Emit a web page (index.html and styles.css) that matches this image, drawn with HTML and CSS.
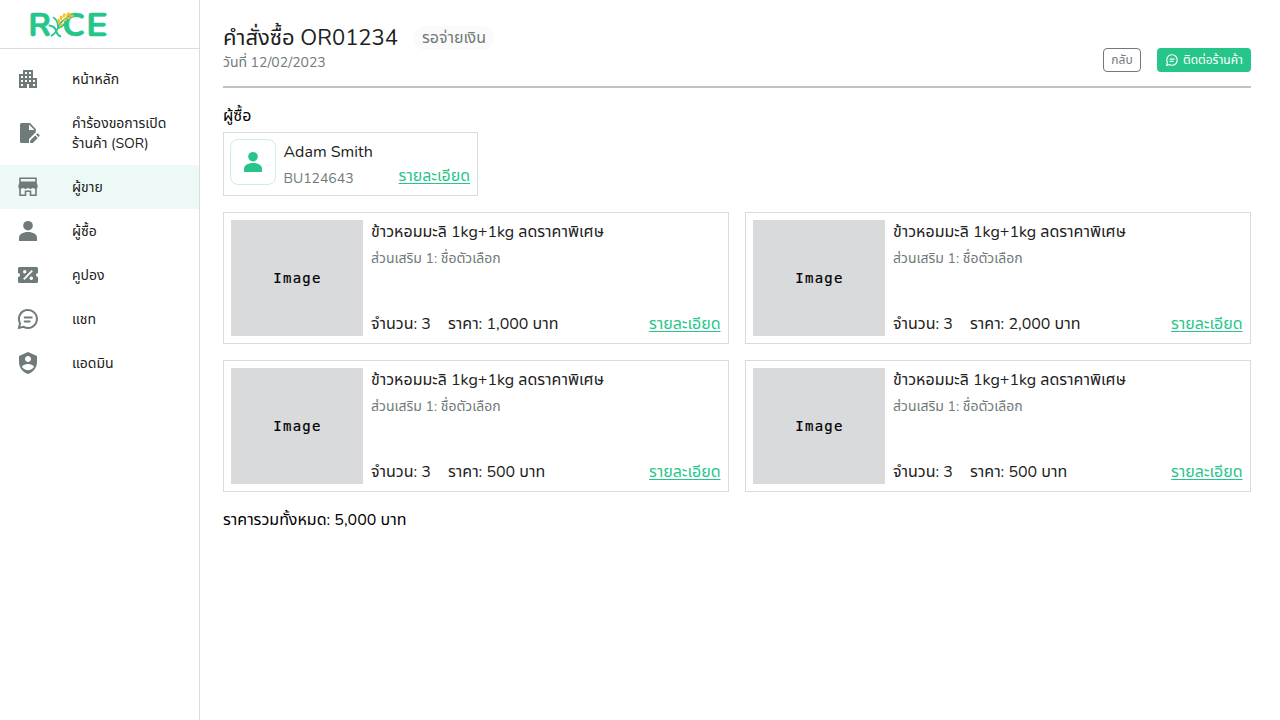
FILE: index.html
```html
<!DOCTYPE html>
<html lang="th">
<head>
<meta charset="utf-8">
<title>RICE</title>
<link rel="stylesheet" href="styles.css">
</head>
<body>
<svg class="defs" width="0" height="0">
  <symbol id="person" viewBox="0 0 24 24"><circle cx="12" cy="6.700" r="4.800"/><path d="M3 22v-3.200c0-3.600 4-5.800 9-5.800s9 2.200 9 5.800V22z"/></symbol>
  <symbol id="chat" viewBox="0 0 24 24"><path d="M3 21l1-4.800A9 9 0 1 1 7.700 19.900z" fill="none" stroke="currentColor" stroke-width="2" stroke-linejoin="miter"/><path d="M8.700 10.400h7M8.700 14.400h5" fill="none" stroke="currentColor" stroke-width="2" stroke-linecap="round"/></symbol>
</svg>
<div class="app">
  <aside class="sidebar">
    <div class="brand">
      <svg class="logo" width="80" height="28" viewBox="29 11 80 28">
        <g class="logo-text"><text transform="translate(28.200 36) scale(1.040 1)">R</text><text transform="translate(62.200 36) scale(1.040 1)">C</text><text transform="translate(86.300 36) scale(1.120 1)">E</text></g>
        <g fill="none" stroke="#26c68a" stroke-linecap="round"><path d="M67.500 18c-5.500 2-8 5.500-9.500 9.500-1.200 3-3.500 6.500-6.500 8.300" stroke-width="1.800"/><path d="M53.500 17.500c2.800 1.800 4.300 4.500 4.300 8.500" stroke-width="1.600"/><path d="M49.500 25.500c3.500.5 5.600 2.200 6.500 5 .6 2.800 1.800 4.800 4.300 5.800" stroke-width="2"/><path d="M68 19.500c-2.500 4.500-4.500 6.500-9.500 8.500" stroke-width="1.800"/></g>
        <g fill="#fdbb24"><ellipse cx="58.800" cy="21" rx="1.400" ry="2.400" transform="rotate(-8 59 21)"/><ellipse cx="61" cy="17.800" rx="1.400" ry="2.400"/><ellipse cx="64" cy="15.500" rx="1.400" ry="2.300" transform="rotate(15 64 15.700)"/><ellipse cx="68" cy="14.200" rx="1.400" ry="2.200" transform="rotate(45 68 14.300)"/><ellipse cx="71.500" cy="15.800" rx="2.400" ry="1.400"/><ellipse cx="68.500" cy="18" rx="2.200" ry="1.300"/><ellipse cx="65" cy="20" rx="2" ry="1.300"/><ellipse cx="61" cy="25" rx="1.400" ry="2" transform="rotate(45 61 25)"/></g>
      </svg>
    </div>
    <nav class="nav">
      <a class="nav-item"><svg class="icon" viewBox="0 0 24 24"><path d="M17 11V3H7v4H3v14h8v-4h2v4h8V11h-4zM7 19H5v-2h2v2zm0-4H5v-2h2v2zm0-4H5V9h2v2zm4 4H9v-2h2v2zm0-4H9V9h2v2zm0-4H9V5h2v2zm4 8h-2v-2h2v2zm0-4h-2V9h2v2zm0-4h-2V5h2v2zm4 12h-2v-2h2v2zm0-4h-2v-2h2v2z"/></svg><span>หน้าหลัก</span></a>
      <a class="nav-item two"><svg class="icon" viewBox="0 0 24 24"><path d="M5.500 2H14l5.800 6v3.300L13 18v4H5.500A1.500 1.500 0 0 1 4 20.500v-17A1.500 1.500 0 0 1 5.500 2zM13 3.600V9h5.400z" fill-rule="evenodd"/><path d="M14.200 22v-2.600l5-5 2.600 2.600-5 5zM20 13.600l.9-.9c.4-.4.900-.4 1.300 0l1.200 1.200c.4.400.4.900 0 1.300l-.9.900z"/></svg><span>คำร้องขอการเปิด<br>ร้านค้า (SOR)</span></a>
      <a class="nav-item active"><svg class="icon" viewBox="0 0 24 24"><path d="M3.600 6.500h16.800l1.300 4.800c0 1.600-.8 2.700-2.200 2.700-1 0-1.800-.5-2.500-1.200-.7.700-1.500 1.200-2.500 1.200s-1.800-.5-2.500-1.200c-.7.700-1.500 1.200-2.500 1.200s-1.800-.5-2.500-1.200c-.7.700-1.500 1.200-2.500 1.200-1.400 0-2.200-1.100-2.200-2.700z"/><path d="M4 7V3.300h16V7M4 12v8.300h5.500v-4h5v4H20V12" fill="none" stroke="currentColor" stroke-width="1.600"/></svg><span>ผู้ขาย</span></a>
      <a class="nav-item"><svg class="icon"><use href="#person"/></svg><span>ผู้ซื้อ</span></a>
      <a class="nav-item"><svg class="icon" viewBox="0 0 24 24"><path d="M3.500 4h17A1.500 1.500 0 0 1 22 5.500V10a2 2 0 0 0 0 4v4.500a1.500 1.500 0 0 1-1.500 1.500h-17A1.500 1.500 0 0 1 2 18.500V14a2 2 0 0 0 0-4V5.500A1.500 1.500 0 0 1 3.500 4z"/><path d="M7.800 16.300l8.400-8.600" stroke="#fff" stroke-width="1.800"/><circle cx="8.700" cy="8.700" r="1.700" fill="#fff"/><circle cx="15.300" cy="15.300" r="1.700" fill="#fff"/></svg><span>คูปอง</span></a>
      <a class="nav-item"><svg class="icon"><use href="#chat"/></svg><span>แชท</span></a>
      <a class="nav-item"><svg class="icon" viewBox="0 0 24 24"><path d="M12 1L3 5v6c0 5.550 3.840 10.740 9 12 5.160-1.260 9-6.450 9-12V5l-9-4zm0 4c1.660 0 3 1.340 3 3s-1.340 3-3 3-3-1.340-3-3 1.340-3 3-3zm0 14.200c-2.500 0-4.710-1.280-6-3.220.03-1.990 4-3.080 6-3.080s5.970 1.090 6 3.080c-1.290 1.940-3.500 3.220-6 3.220z"/></svg><span>แอดมิน</span></a>
    </nav>
  </aside>
  <main class="main">
    <header class="head">
      <div>
        <div class="title-row"><h1 class="title">คำสั่งซื้อ OR01234</h1><span class="badge">รอจ่ายเงิน</span></div>
        <p class="date">วันที่ 12/02/2023</p>
      </div>
      <div class="actions"><button class="btn back">กลับ</button><button class="btn contact"><svg class="chat-icon"><use href="#chat"/></svg>ติดต่อร้านค้า</button></div>
    </header>
    <h2 class="section">ผู้ซื้อ</h2>
    <div class="buyer">
      <div class="avatar"><svg class="icon"><use href="#person"/></svg></div>
      <div class="buyer-body"><div class="buyer-name">Adam Smith</div><div class="row"><span class="muted">BU124643</span><a class="link">รายละเอียด</a></div></div>
    </div>
    <div class="grid">
      <article class="card"><div class="image">Image</div><div class="body"><h3 class="name">ข้าวหอมมะลิ 1kg+1kg ลดราคาพิเศษ</h3><p class="muted">ส่วนเสริม 1: ชื่อตัวเลือก</p><div class="row foot"><span class="qty">จำนวน: 3</span><span class="price">ราคา: 1,000 บาท</span><a class="link">รายละเอียด</a></div></div></article>
      <article class="card"><div class="image">Image</div><div class="body"><h3 class="name">ข้าวหอมมะลิ 1kg+1kg ลดราคาพิเศษ</h3><p class="muted">ส่วนเสริม 1: ชื่อตัวเลือก</p><div class="row foot"><span class="qty">จำนวน: 3</span><span class="price">ราคา: 2,000 บาท</span><a class="link">รายละเอียด</a></div></div></article>
      <article class="card"><div class="image">Image</div><div class="body"><h3 class="name">ข้าวหอมมะลิ 1kg+1kg ลดราคาพิเศษ</h3><p class="muted">ส่วนเสริม 1: ชื่อตัวเลือก</p><div class="row foot"><span class="qty">จำนวน: 3</span><span class="price">ราคา: 500 บาท</span><a class="link">รายละเอียด</a></div></div></article>
      <article class="card"><div class="image">Image</div><div class="body"><h3 class="name">ข้าวหอมมะลิ 1kg+1kg ลดราคาพิเศษ</h3><p class="muted">ส่วนเสริม 1: ชื่อตัวเลือก</p><div class="row foot"><span class="qty">จำนวน: 3</span><span class="price">ราคา: 500 บาท</span><a class="link">รายละเอียด</a></div></div></article>
    </div>
    <p class="total">ราคารวมทั้งหมด: 5,000 บาท</p>
  </main>
</div>
</body>
</html>
```
FILE: styles.css
```css
* { box-sizing: border-box; margin: 0; padding: 0; }
body { font-family: Nunito, "Noto Sans Thai", "Noto Sans", sans-serif; font-size: 16px; line-height: 24px; color: #212121; background: #fff; overflow: hidden; }
.defs { position: absolute; }
svg { fill: currentColor; flex: none; }
.app { display: flex; height: 720px; }
.sidebar { width: 200px; border-right: 1px solid #dcdcdc; flex: none; }
.brand { height: 49px; border-bottom: 1px solid #dcdcdc; padding: 11px 0 0 29px; }
.logo { display: block; overflow: visible; }
.logo-text { font-family: Nunito, sans-serif; font-size: 32px; font-weight: 700; fill: #26c68a; stroke: #26c68a; stroke-width: .6; stroke-linejoin: round; }
.nav { padding-top: 8px; }
.nav-item { display: flex; align-items: center; gap: 32px; height: 44px; padding-left: 16px; font-size: 14px; line-height: 20px; white-space: nowrap; }
.nav-item span { padding-top: 2px; }
.nav-item.two { height: 64px; }
.nav-item.active { background: #edf9f6; }
.icon { width: 24px; height: 24px; color: #6f7a7a; }
.main { flex: 1; padding: 24px 29px 0 23px; white-space: nowrap; }
.head { display: flex; justify-content: space-between; align-items: flex-end; height: 64px; border-bottom: 2px solid #c2c2c2; padding-bottom: 14px; }
.title-row { display: flex; align-items: center; height: 27px; gap: 16px; }
.title { font-size: 22px; font-weight: 400; }
.badge { height: 24px; border-radius: 12px; padding: 0 8px; background: #fafafa; color: #6f7a7a; }
.date { font-size: 14px; line-height: 21px; height: 21px; padding-top: 1px; color: #6f7a7a; }
.actions { display: flex; gap: 16px; }
.btn { height: 24px; border-radius: 4px; font: 12px/22px Nunito, "Noto Sans Thai", "Noto Sans", sans-serif; display: flex; align-items: center; justify-content: center; white-space: nowrap; }
.back { width: 38px; border: 1px solid #6f7a7a; background: #fff; color: #6f7a7a; }
.contact { width: 94px; border: 0; background: #26c68a; color: #fff; gap: 4px; }
.chat-icon { width: 14px; height: 14px; }
.section { font-size: 16px; font-weight: 400; color: #000; margin-top: 16px; height: 28px; }
.buyer { width: 255px; height: 64px; border: 1px solid #d9dadb; padding: 6px 7px 6px 6px; display: flex; gap: 7.500px; }
.avatar { width: 46px; height: 46px; border: 1.500px solid #c9f1e2; border-radius: 8px; display: flex; align-items: center; justify-content: center; }
.avatar .icon { color: #26c68a; }
.buyer-body { flex: 1; padding-top: 1px; }
.buyer .muted { padding-top: 6px; }
.row { display: flex; align-items: center; }
.buyer .row { height: 24px; }
.muted { font-size: 14px; color: #6f7a7a; }
.body > .muted { margin-top: 3px; }
.link { margin-left: auto; color: #26c68a; text-decoration: underline; text-decoration-thickness: 1px; text-decoration-skip-ink: none; text-underline-offset: 2px; }
.grid { display: grid; grid-template-columns: 506px 506px; gap: 16px; margin-top: 16px; }
.card { height: 132px; border: 1px solid #d9dadb; padding: 7px; display: flex; gap: 8px; }
.card .link { padding-right: .5px; }
.image { width: 132px; height: 116px; background: #d9dadc; color: #000; font: 14px "DejaVu Sans Mono", monospace; letter-spacing: 1.300px; padding-left: 1px; -webkit-text-stroke: .2px #000; display: flex; align-items: center; justify-content: center; }
.body { flex: 1; display: flex; flex-direction: column; }
.name { font-size: 16px; font-weight: 400; }
.foot { margin-top: auto; }
.qty { width: 77px; }
.total { margin-top: 16px; color: #000; }
```
